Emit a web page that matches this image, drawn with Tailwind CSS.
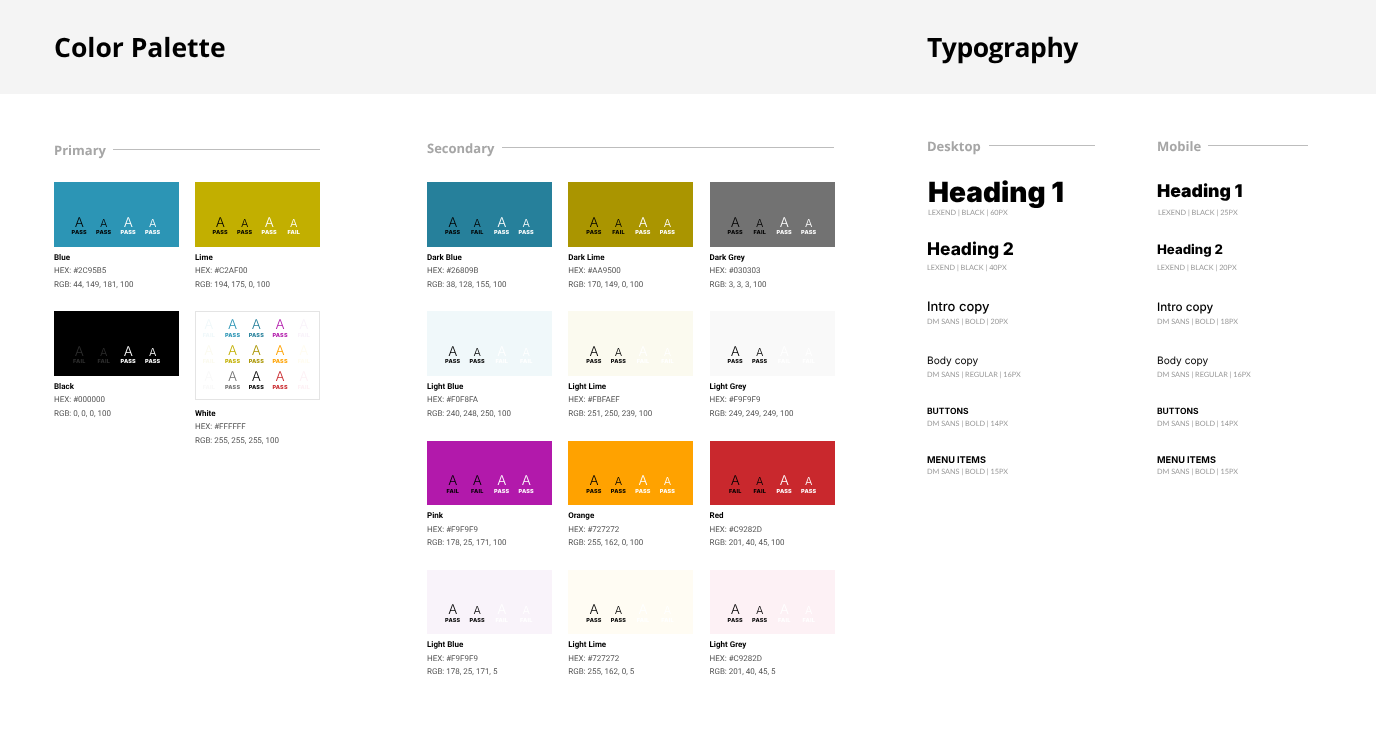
<!doctype html>
<html lang="en">
<head>
<meta charset="utf-8">
<title>Style guide</title>
<script src="https://cdn.jsdelivr.net/npm/@tailwindcss/browser@4"></script>
</head>
<body class="bg-white font-['Open_Sans',sans-serif] text-black overflow-hidden [text-rendering:geometricPrecision] [&_i]:block [&_i]:not-italic [&_i]:font-light [&_i]:font-['Inter',sans-serif] [&_i]:leading-[12px] [&_i]:mb-[1.5px] [&_b]:block [&_b]:text-[5.5px] [&_b]:leading-[7px] [&_b]:font-extrabold [&_b]:font-['Inter',sans-serif] [&_b]:tracking-[0.2px]">
<header class="h-[94px] bg-[#f4f4f4] flex items-center pl-[54px] pt-[2px]">
  <h1 class="w-[873px] text-[26.5px] font-bold will-change-transform">Color Palette</h1>
  <h1 class="text-[26.5px] font-bold tracking-[-0.5px] will-change-transform">Typography</h1>
</header>
<main class="flex pl-[54px] will-change-transform">
  <section class="w-[373px] pt-[45px]">
    <div class="w-[266px] h-[20px] mb-[23px] flex items-center gap-[7px]"><h2 class="pt-[4px] text-[13px] font-bold text-[#a6a6a6]">Primary</h2><div class="flex-1 h-px bg-[#bdbdbd]"></div></div>
    <div class="grid grid-cols-[125px_125px] gap-x-[16px] auto-rows-[129.33px]">
      <div><div class="h-[64.5px] bg-[#2c95b5] flex items-end pl-[13px] pb-[9.5px] text-center">
        <p class="w-[24.5px] text-black"><i class="text-[13.5px]">A</i><b>PASS</b></p><p class="w-[24.5px] text-black"><i class="text-[11px]">A</i><b>PASS</b></p><p class="w-[24.5px] text-white"><i class="text-[13.5px]">A</i><b>PASS</b></p><p class="w-[24.5px] text-white"><i class="text-[11px]">A</i><b>PASS</b></p></div>
        <div class="mt-[4px] font-['Roboto',sans-serif] text-[8px] leading-[13.5px] text-[#555]"><h3 class="font-bold text-black">Blue</h3><div>HEX: #2C95B5</div><div>RGB: 44, 149, 181, 100</div></div></div>
      <div><div class="h-[64.5px] bg-[#c2af00] flex items-end pl-[13px] pb-[9.5px] text-center">
        <p class="w-[24.5px] text-black"><i class="text-[13.5px]">A</i><b>PASS</b></p><p class="w-[24.5px] text-black"><i class="text-[11px]">A</i><b>PASS</b></p><p class="w-[24.5px] text-white"><i class="text-[13.5px]">A</i><b>PASS</b></p><p class="w-[24.5px] text-white"><i class="text-[11px]">A</i><b>FAIL</b></p></div>
        <div class="mt-[4px] font-['Roboto',sans-serif] text-[8px] leading-[13.5px] text-[#555]"><h3 class="font-bold text-black">Lime</h3><div>HEX: #C2AF00</div><div>RGB: 194, 175, 0, 100</div></div></div>
      <div><div class="h-[64.5px] bg-black flex items-end pl-[13px] pb-[9.5px] text-center">
        <p class="w-[24.5px] text-[#2e2e2e]"><i class="text-[13.5px]">A</i><b>FAIL</b></p><p class="w-[24.5px] text-[#2e2e2e]"><i class="text-[11px]">A</i><b>FAIL</b></p><p class="w-[24.5px] text-white"><i class="text-[13.5px]">A</i><b>PASS</b></p><p class="w-[24.5px] text-white"><i class="text-[11px]">A</i><b>PASS</b></p></div>
        <div class="mt-[4px] font-['Roboto',sans-serif] text-[8px] leading-[13.5px] text-[#555]"><h3 class="font-bold text-black">Black</h3><div>HEX: #000000</div><div>RGB: 0, 0, 0, 100</div></div></div>
      <div><div class="h-[89px] border border-[#e4e4e4] grid grid-cols-[repeat(5,23.75px)] content-start gap-y-[5.5px] pl-[1px] pt-[7px] text-center">
        <p class="text-[#f0f8fa]"><i class="text-[13.5px]">A</i><b>FAIL</b></p><p class="text-[#2c95b5]"><i class="text-[13.5px]">A</i><b>PASS</b></p><p class="text-[#26809b]"><i class="text-[13.5px]">A</i><b>PASS</b></p><p class="text-[#b219ab]"><i class="text-[13.5px]">A</i><b>PASS</b></p><p class="text-[#f9f3fa]"><i class="text-[13.5px]">A</i><b>FAIL</b></p>
        <p class="text-[#fbfaef]"><i class="text-[13.5px]">A</i><b>FAIL</b></p><p class="text-[#c2af00]"><i class="text-[13.5px]">A</i><b>PASS</b></p><p class="text-[#aa9500]"><i class="text-[13.5px]">A</i><b>PASS</b></p><p class="text-[#ffa200]"><i class="text-[13.5px]">A</i><b>PASS</b></p><p class="text-[#fffcf0]"><i class="text-[13.5px]">A</i><b>FAIL</b></p>
        <p class="text-[#f9f9f9]"><i class="text-[13.5px]">A</i><b>FAIL</b></p><p class="text-[#727272]"><i class="text-[13.5px]">A</i><b>PASS</b></p><p class="text-[#030303]"><i class="text-[13.5px]">A</i><b>PASS</b></p><p class="text-[#c9282d]"><i class="text-[13.5px]">A</i><b>PASS</b></p><p class="text-[#fdf1f5]"><i class="text-[13.5px]">A</i><b>FAIL</b></p></div>
        <div class="mt-[6.5px] font-['Roboto',sans-serif] text-[8px] leading-[13.5px] text-[#555]"><h3 class="font-bold text-black">White</h3><div>HEX: #FFFFFF</div><div>RGB: 255, 255, 255, 100</div></div></div>
    </div>
  </section>
  <section class="w-[407px] mr-[93px] pt-[43px]">
    <div class="h-[20px] mb-[25px] flex items-center gap-[7px]"><h2 class="pt-[4px] text-[13px] font-bold text-[#a6a6a6]">Secondary</h2><div class="flex-1 h-px bg-[#bdbdbd]"></div></div>
    <div class="grid grid-cols-[125px_125px_125px] gap-x-[16.25px] auto-rows-[129.33px]">
      <div><div class="h-[64.5px] bg-[#26809b] flex items-end pl-[13.5px] pb-[9.5px] text-center">
        <p class="w-[24.5px] text-black"><i class="text-[13.5px]">A</i><b>PASS</b></p><p class="w-[24.5px] text-black"><i class="text-[11px]">A</i><b>FAIL</b></p><p class="w-[24.5px] text-white"><i class="text-[13.5px]">A</i><b>PASS</b></p><p class="w-[24.5px] text-white"><i class="text-[11px]">A</i><b>PASS</b></p></div>
        <div class="mt-[4px] font-['Roboto',sans-serif] text-[8px] leading-[13.5px] text-[#555]"><h3 class="font-bold text-black">Dark Blue</h3><div>HEX: #26809B</div><div>RGB: 38, 128, 155, 100</div></div></div>
      <div><div class="h-[64.5px] bg-[#aa9500] flex items-end pl-[13.5px] pb-[9.5px] text-center">
        <p class="w-[24.5px] text-black"><i class="text-[13.5px]">A</i><b>PASS</b></p><p class="w-[24.5px] text-black"><i class="text-[11px]">A</i><b>FAIL</b></p><p class="w-[24.5px] text-white"><i class="text-[13.5px]">A</i><b>PASS</b></p><p class="w-[24.5px] text-white"><i class="text-[11px]">A</i><b>PASS</b></p></div>
        <div class="mt-[4px] font-['Roboto',sans-serif] text-[8px] leading-[13.5px] text-[#555]"><h3 class="font-bold text-black">Dark Lime</h3><div>HEX: #AA9500</div><div>RGB: 170, 149, 0, 100</div></div></div>
      <div><div class="h-[64.5px] bg-[#727272] flex items-end pl-[13.5px] pb-[9.5px] text-center">
        <p class="w-[24.5px] text-black"><i class="text-[13.5px]">A</i><b>PASS</b></p><p class="w-[24.5px] text-black"><i class="text-[11px]">A</i><b>FAIL</b></p><p class="w-[24.5px] text-white"><i class="text-[13.5px]">A</i><b>PASS</b></p><p class="w-[24.5px] text-white"><i class="text-[11px]">A</i><b>PASS</b></p></div>
        <div class="mt-[4px] font-['Roboto',sans-serif] text-[8px] leading-[13.5px] text-[#555]"><h3 class="font-bold text-black">Dark Grey</h3><div>HEX: #030303</div><div>RGB: 3, 3, 3, 100</div></div></div>

      <div><div class="h-[64.5px] bg-[#f0f8fa] flex items-end pl-[13.5px] pb-[9.5px] text-center">
        <p class="w-[24.5px] text-black"><i class="text-[13.5px]">A</i><b>PASS</b></p><p class="w-[24.5px] text-black"><i class="text-[11px]">A</i><b>PASS</b></p><p class="w-[24.5px] text-white"><i class="text-[13.5px]">A</i><b>FAIL</b></p><p class="w-[24.5px] text-white"><i class="text-[11px]">A</i><b>FAIL</b></p></div>
        <div class="mt-[4px] font-['Roboto',sans-serif] text-[8px] leading-[13.5px] text-[#555]"><h3 class="font-bold text-black">Light Blue</h3><div>HEX: #F0F8FA</div><div>RGB: 240, 248, 250, 100</div></div></div>
      <div><div class="h-[64.5px] bg-[#fbfaef] flex items-end pl-[13.5px] pb-[9.5px] text-center">
        <p class="w-[24.5px] text-black"><i class="text-[13.5px]">A</i><b>PASS</b></p><p class="w-[24.5px] text-black"><i class="text-[11px]">A</i><b>PASS</b></p><p class="w-[24.5px] text-white"><i class="text-[13.5px]">A</i><b>FAIL</b></p><p class="w-[24.5px] text-white"><i class="text-[11px]">A</i><b>FAIL</b></p></div>
        <div class="mt-[4px] font-['Roboto',sans-serif] text-[8px] leading-[13.5px] text-[#555]"><h3 class="font-bold text-black">Light Lime</h3><div>HEX: #FBFAEF</div><div>RGB: 251, 250, 239, 100</div></div></div>
      <div><div class="h-[64.5px] bg-[#f9f9f9] flex items-end pl-[13.5px] pb-[9.5px] text-center">
        <p class="w-[24.5px] text-black"><i class="text-[13.5px]">A</i><b>PASS</b></p><p class="w-[24.5px] text-black"><i class="text-[11px]">A</i><b>PASS</b></p><p class="w-[24.5px] text-white"><i class="text-[13.5px]">A</i><b>FAIL</b></p><p class="w-[24.5px] text-white"><i class="text-[11px]">A</i><b>FAIL</b></p></div>
        <div class="mt-[4px] font-['Roboto',sans-serif] text-[8px] leading-[13.5px] text-[#555]"><h3 class="font-bold text-black">Light Grey</h3><div>HEX: #F9F9F9</div><div>RGB: 249, 249, 249, 100</div></div></div>

      <div><div class="h-[64.5px] bg-[#b219ab] flex items-end pl-[13.5px] pb-[9.5px] text-center">
        <p class="w-[24.5px] text-black"><i class="text-[13.5px]">A</i><b>FAIL</b></p><p class="w-[24.5px] text-black"><i class="text-[13.5px]">A</i><b>FAIL</b></p><p class="w-[24.5px] text-white"><i class="text-[13.5px]">A</i><b>PASS</b></p><p class="w-[24.5px] text-white"><i class="text-[13.5px]">A</i><b>PASS</b></p></div>
        <div class="mt-[4px] font-['Roboto',sans-serif] text-[8px] leading-[13.5px] text-[#555]"><h3 class="font-bold text-black">Pink</h3><div>HEX: #F9F9F9</div><div>RGB: 178, 25, 171, 100</div></div></div>
      <div><div class="h-[64.5px] bg-[#ffa200] flex items-end pl-[13.5px] pb-[9.5px] text-center">
        <p class="w-[24.5px] text-black"><i class="text-[13.5px]">A</i><b>PASS</b></p><p class="w-[24.5px] text-black"><i class="text-[11px]">A</i><b>PASS</b></p><p class="w-[24.5px] text-white"><i class="text-[13.5px]">A</i><b>PASS</b></p><p class="w-[24.5px] text-white"><i class="text-[11px]">A</i><b>PASS</b></p></div>
        <div class="mt-[4px] font-['Roboto',sans-serif] text-[8px] leading-[13.5px] text-[#555]"><h3 class="font-bold text-black">Orange</h3><div>HEX: #727272</div><div>RGB: 255, 162, 0, 100</div></div></div>
      <div><div class="h-[64.5px] bg-[#c9282d] flex items-end pl-[13.5px] pb-[9.5px] text-center">
        <p class="w-[24.5px] text-black"><i class="text-[13.5px]">A</i><b>FAIL</b></p><p class="w-[24.5px] text-black"><i class="text-[11px]">A</i><b>FAIL</b></p><p class="w-[24.5px] text-white"><i class="text-[13.5px]">A</i><b>PASS</b></p><p class="w-[24.5px] text-white"><i class="text-[11px]">A</i><b>PASS</b></p></div>
        <div class="mt-[4px] font-['Roboto',sans-serif] text-[8px] leading-[13.5px] text-[#555]"><h3 class="font-bold text-black">Red</h3><div>HEX: #C9282D</div><div>RGB: 201, 40, 45, 100</div></div></div>

      <div><div class="h-[64.5px] bg-[#f9f3fa] flex items-end pl-[13.5px] pb-[9.5px] text-center">
        <p class="w-[24.5px] text-black"><i class="text-[13.5px]">A</i><b>PASS</b></p><p class="w-[24.5px] text-black"><i class="text-[11px]">A</i><b>PASS</b></p><p class="w-[24.5px] text-white"><i class="text-[13.5px]">A</i><b>FAIL</b></p><p class="w-[24.5px] text-white"><i class="text-[11px]">A</i><b>FAIL</b></p></div>
        <div class="mt-[4px] font-['Roboto',sans-serif] text-[8px] leading-[13.5px] text-[#555]"><h3 class="font-bold text-black">Light Blue</h3><div>HEX: #F9F9F9</div><div>RGB: 178, 25, 171, 5</div></div></div>
      <div><div class="h-[64.5px] bg-[#fffcf3] flex items-end pl-[13.5px] pb-[9.5px] text-center">
        <p class="w-[24.5px] text-black"><i class="text-[13.5px]">A</i><b>PASS</b></p><p class="w-[24.5px] text-black"><i class="text-[11px]">A</i><b>PASS</b></p><p class="w-[24.5px] text-white"><i class="text-[13.5px]">A</i><b>FAIL</b></p><p class="w-[24.5px] text-white"><i class="text-[11px]">A</i><b>FAIL</b></p></div>
        <div class="mt-[4px] font-['Roboto',sans-serif] text-[8px] leading-[13.5px] text-[#555]"><h3 class="font-bold text-black">Light Lime</h3><div>HEX: #727272</div><div>RGB: 255, 162, 0, 5</div></div></div>
      <div><div class="h-[64.5px] bg-[#fdf1f5] flex items-end pl-[13.5px] pb-[9.5px] text-center">
        <p class="w-[24.5px] text-black"><i class="text-[13.5px]">A</i><b>PASS</b></p><p class="w-[24.5px] text-black"><i class="text-[11px]">A</i><b>PASS</b></p><p class="w-[24.5px] text-white"><i class="text-[13.5px]">A</i><b>FAIL</b></p><p class="w-[24.5px] text-white"><i class="text-[11px]">A</i><b>FAIL</b></p></div>
        <div class="mt-[4px] font-['Roboto',sans-serif] text-[8px] leading-[13.5px] text-[#555]"><h3 class="font-bold text-black">Light Grey</h3><div>HEX: #C9282D</div><div>RGB: 201, 40, 45, 5</div></div></div>
    </div>
  </section>
  <section class="w-[230px] pt-[41px]">
    <div class="w-[168px] h-[20px] mb-[22px] flex items-center gap-[8px]"><h2 class="pt-[4px] text-[13px] font-bold text-[#a6a6a6]">Desktop</h2><div class="flex-1 h-px bg-[#bdbdbd]"></div></div>
    <div class="pl-[1px] text-[28px] leading-[30px] font-black font-['Inter',sans-serif]">Heading 1</div>
    <div class="mt-[2px] pl-[1px] text-[7.3px] leading-[8px] font-['Lato',sans-serif] text-[#999]">LEXEND | BLACK | 60PX</div>
    <div class="mt-[22px] text-[17.4px] leading-[22px] font-extrabold font-['Inter',sans-serif]">Heading 2</div>
    <div class="mt-[2.5px] text-[7.3px] leading-[8px] font-['Lato',sans-serif] text-[#999]">LEXEND | BLACK | 40PX</div>
    <div class="mt-[25.5px] text-[13px] leading-[20px] font-medium font-['Inter',sans-serif]">Intro copy</div>
    <div class="mt-[1px] text-[7.3px] leading-[8px] font-['Lato',sans-serif] text-[#999]">DM SANS | BOLD | 20PX</div>
    <div class="mt-[26.5px] text-[10.2px] leading-[16px] font-['Inter',sans-serif]">Body copy</div>
    <div class="mt-[2px] text-[7.3px] leading-[8px] font-['Lato',sans-serif] text-[#999]">DM SANS | REGULAR | 16PX</div>
    <div class="mt-[27px] text-[8.5px] leading-[12px] font-bold font-['Inter',sans-serif]">BUTTONS</div>
    <div class="mt-[2px] text-[7.3px] leading-[8px] font-['Lato',sans-serif] text-[#999]">DM SANS | BOLD | 14PX</div>
    <div class="mt-[27.5px] text-[9.2px] leading-[12px] font-bold font-['Inter',sans-serif]">MENU ITEMS</div>
    <div class="mt-[1px] text-[7.3px] leading-[8px] font-['Lato',sans-serif] text-[#999]">DM SANS | BOLD | 15PX</div>
  </section>
  <section class="w-[151px] pt-[41px]">
    <div class="h-[20px] mb-[22px] flex items-center gap-[7px]"><h2 class="pt-[4px] text-[13px] font-bold text-[#a6a6a6]">Mobile</h2><div class="flex-1 h-px bg-[#bdbdbd]"></div></div>
    <div class="text-[17.6px] leading-[30px] font-black font-['Inter',sans-serif]">Heading 1</div>
    <div class="mt-[2px] pl-[1px] text-[7.3px] leading-[8px] font-['Lato',sans-serif] text-[#999]">LEXEND | BLACK | 25PX</div>
    <div class="mt-[22px] text-[13.2px] leading-[22px] font-extrabold font-['Inter',sans-serif]">Heading 2</div>
    <div class="mt-[2.5px] text-[7.3px] leading-[8px] font-['Lato',sans-serif] text-[#999]">LEXEND | BLACK | 20PX</div>
    <div class="mt-[25.5px] text-[11.7px] leading-[20px] font-medium font-['Inter',sans-serif]">Intro copy</div>
    <div class="mt-[1px] text-[7.3px] leading-[8px] font-['Lato',sans-serif] text-[#999]">DM SANS | BOLD | 18PX</div>
    <div class="mt-[26.5px] text-[10.2px] leading-[16px] font-['Inter',sans-serif]">Body copy</div>
    <div class="mt-[2px] text-[7.3px] leading-[8px] font-['Lato',sans-serif] text-[#999]">DM SANS | REGULAR | 16PX</div>
    <div class="mt-[27px] text-[8.5px] leading-[12px] font-bold font-['Inter',sans-serif]">BUTTONS</div>
    <div class="mt-[2px] text-[7.3px] leading-[8px] font-['Lato',sans-serif] text-[#999]">DM SANS | BOLD | 14PX</div>
    <div class="mt-[27.5px] text-[9.2px] leading-[12px] font-bold font-['Inter',sans-serif]">MENU ITEMS</div>
    <div class="mt-[1px] text-[7.3px] leading-[8px] font-['Lato',sans-serif] text-[#999]">DM SANS | BOLD | 15PX</div>
  </section>
</main>
</body>
</html>
